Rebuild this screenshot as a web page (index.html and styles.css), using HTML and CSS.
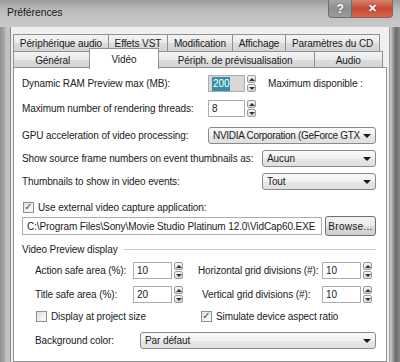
FILE: index.html
```html
<!DOCTYPE html>
<html lang="fr">

<head>
    <meta charset="UTF-8" />
    <title>Préférences</title>
    <link rel="stylesheet" href="styles.css">
</head>

<body>

    <div class="window">
        <div class="titlebar">
            <span class="title">Préférences</span>
            <div class="caption-btns">
                <div class="cap-btn help">?</div>
                <div class="cap-btn close">&#10005;</div>
            </div>
        </div>

        <div class="client">
            <div class="tab-row back">
                <div class="tab">Périphérique audio</div>
                <div class="tab">Effets VST</div>
                <div class="tab">Modification</div>
                <div class="tab">Affichage</div>
                <div class="tab">Paramètres du CD</div>
            </div>
            <div class="tab-row front">
                <div class="tab">Général</div>
                <div class="tab active">Vidéo</div>
                <div class="tab">Périph. de prévisualisation</div>
                <div class="tab">Audio</div>
            </div>

            <div class="panel">
                <div class="row">
                    <span class="label">Dynamic RAM Preview max (MB):</span>
                    <div class="spin">
                        <div class="spin-input grey"><span class="selected">200</span></div>
                        <div class="spin-arrows"><span class="up"></span><span class="down"></span></div>
                    </div>
                    <span class="note">Maximum disponible :</span>
                </div>

                <div class="row mt-8">
                    <span class="label">Maximum number of rendering threads:</span>
                    <div class="spin">
                        <div class="spin-input">8</div>
                        <div class="spin-arrows"><span class="up"></span><span class="down"></span></div>
                    </div>
                </div>

                <div class="row mt-10">
                    <span class="label">GPU acceleration of video processing:</span>
                    <div class="combo"><span class="value tight">NVIDIA Corporation (GeForce GTX</span></div>
                </div>

                <div class="row mt-6">
                    <span class="label wide">Show source frame numbers on event thumbnails as:</span>
                    <div class="combo"><span class="value">Aucun</span></div>
                </div>

                <div class="row mt-6">
                    <span class="label wide">Thumbnails to show in video events:</span>
                    <div class="combo"><span class="value">Tout</span></div>
                </div>

                <div class="row check-row mt-10">
                    <span class="checkbox checked"></span>
                    <span>Use external video capture application:</span>
                </div>

                <div class="row path-row mt-2">
                    <div class="text-input">C:\Program Files\Sony\Movie Studio Platinum 12.0\VidCap60.EXE</div>
                    <div class="button">Browse...</div>
                </div>

                <div class="group-title mt-6">Video Preview display</div>

                <div class="group">
                    <div class="row mt-6">
                        <span class="label small">Action safe area (%):</span>
                        <div class="spin short">
                            <div class="spin-input">10</div>
                            <div class="spin-arrows"><span class="up"></span><span class="down"></span></div>
                        </div>
                        <span class="label right">Horizontal grid divisions (#):</span>
                        <div class="spin short">
                            <div class="spin-input">10</div>
                            <div class="spin-arrows"><span class="up"></span><span class="down"></span></div>
                        </div>
                    </div>

                    <div class="row mt-7">
                        <span class="label small">Title safe area (%):</span>
                        <div class="spin short">
                            <div class="spin-input">20</div>
                            <div class="spin-arrows"><span class="up"></span><span class="down"></span></div>
                        </div>
                        <span class="label right vertical">Vertical grid divisions (#):</span>
                        <div class="spin short">
                            <div class="spin-input">10</div>
                            <div class="spin-arrows"><span class="up"></span><span class="down"></span></div>
                        </div>
                    </div>

                    <div class="row check-row mt-6">
                        <span class="check-cell">
                            <span class="checkbox"></span>
                            <span>Display at project size</span>
                        </span>
                        <span class="checkbox checked"></span>
                        <span>Simulate device aspect ratio</span>
                    </div>

                    <div class="row mt-9">
                        <span class="label bg">Background color:</span>
                        <div class="combo"><span class="value">Par défaut</span></div>
                    </div>
                </div>
            </div>
        </div>
    </div>

</body>

</html>
```

FILE: styles.css
```css
body {
    margin: 0;
    padding: 0;
    font-family: "Liberation Sans", Arial, sans-serif;
    font-size: 10px;
    letter-spacing: -0.1px;
    color: #1a1a1a;
    overflow: hidden;
}

.window {
    width: 400px;
    height: 362px;
    display: flex;
    flex-direction: column;
    overflow: hidden;
    background: linear-gradient(to right, #8e8e8e 0, #a4a4a4 4px, #c2c2c2 6px, #c6c6c6 391px, #9a9a9a 393px, #6a6a6a 396px, #8a8a8a 400px);
}

/* title bar */
.titlebar {
    height: 27px;
    flex: none;
    display: flex;
    justify-content: space-between;
    align-items: flex-start;
    background: linear-gradient(to bottom, #9c9c9c 0, #bcbcbc 10px, #c9c9c9 27px);
}

.title {
    font-size: 10.5px;
    margin: 6px 0 0 7px;
    color: #1a1a1a;
}

.caption-btns {
    display: flex;
    margin-right: 7px;
}

.cap-btn {
    height: 18px;
    display: flex;
    align-items: center;
    justify-content: center;
    color: #fff;
    font-weight: bold;
    border: 1px solid #6e6e6e;
    border-top: none;
    box-sizing: border-box;
}

.help {
    width: 24px;
    font-size: 12px;
    border-radius: 0 0 0 4px;
    background: linear-gradient(to bottom, #a6a6a6, #8e8e8e 50%, #9c9c9c);
    text-shadow: 0 0 2px #555;
}

.close {
    width: 41px;
    font-size: 11px;
    border-left: none;
    border-radius: 0 0 4px 0;
    background: linear-gradient(to bottom, #d9816f, #c64a35 50%, #d2674e);
    text-shadow: 0 0 2px #8a2010;
}

/* dialog client area */
.client {
    flex: 1;
    margin: 0 10px;
    padding: 7px 2px 0 2px;
    background: #f0f0f0;
    border-left: 1px solid #8a8a8a;
    border-right: 1px solid #a0a0a0;
    display: flex;
    flex-direction: column;
}

.tab-row {
    display: flex;
    height: 17px;
}

.tab-row.back {
    margin: 0 7px 0 1px;
}

.tab-row.front {
    margin: 0 4px 0 1px;
}

.tab {
    flex: 1 1 auto;
    display: flex;
    align-items: center;
    justify-content: center;
    padding: 0 5px;
    white-space: nowrap;
    border: 1px solid #8e9097;
    border-bottom: none;
    margin-left: -1px;
    background: linear-gradient(to bottom, #f4f4f4, #e9e9e9 50%, #dcdcdc 51%, #d3d3d3);
}

.tab.active {
    background: #fff;
    margin: -3px -2px 0 -3px;
    height: 21px;
    z-index: 2;
    box-sizing: border-box;
}

.panel {
    flex: 1;
    background: #fff;
    border: 1px solid #8e9097;
    margin-top: -1px;
    padding: 7px 10px 0 8px;
    display: flex;
    flex-direction: column;
}

/* rows */
.row {
    display: flex;
    align-items: center;
    height: 17px;
    white-space: nowrap;
}

.mt-2 { margin-top: 2px; }
.mt-6 { margin-top: 6px; }
.mt-7 { margin-top: 7px; }
.mt-8 { margin-top: 8px; }
.mt-9 { margin-top: 9px; }
.mt-10 { margin-top: 10px; }

.label {
    width: 186px;
    flex: none;
}

.label.wide {
    width: 240px;
}

.label.small {
    width: 98px;
}

.label.right {
    width: 124px;
    margin-left: 15px;
}

.label.vertical {
    width: 120px;
    margin-left: 19px;
}

.label.bg {
    width: 105px;
}

.note {
    margin-left: 12px;
}

/* spin boxes */
.spin {
    display: flex;
    align-items: center;
    width: 48px;
    height: 17px;
}

.spin.short {
    width: 50px;
}

.spin-input {
    flex: 1;
    height: 17px;
    box-sizing: border-box;
    border: 1px solid #abadb3;
    display: flex;
    align-items: center;
    padding-left: 3px;
    background: #fff;
}

.spin-input.grey {
    background: #d8d8d8;
}

.selected {
    background: #3590a6;
    color: #fff;
    padding: 0 1px;
    line-height: 14px;
}

.spin-arrows {
    width: 9px;
    height: 17px;
    margin-left: 2px;
    display: flex;
    flex-direction: column;
    gap: 1px;
}

.spin-arrows span {
    flex: 1;
    border: 1px solid #9a9a9a;
    border-radius: 2px;
    background: linear-gradient(to bottom, #f6f6f6, #d8d8d8);
    display: flex;
    align-items: center;
    justify-content: center;
}

.spin-arrows .up::before {
    content: "";
    border: 3px solid transparent;
    border-top: none;
    border-bottom: 3px solid #333;
}

.spin-arrows .down::before {
    content: "";
    border: 3px solid transparent;
    border-bottom: none;
    border-top: 3px solid #333;
}

/* combo boxes */
.combo {
    flex: 1;
    min-width: 0;
    height: 17px;
    box-sizing: border-box;
    border: 1px solid #8a8a8a;
    border-radius: 3px;
    padding-left: 4px;
    display: flex;
    align-items: center;
    background: linear-gradient(to bottom, #fafafa, #f0f0f0 50%, #e6e6e6 51%, #e0e0e0);
}

.combo .value {
    flex: 1;
    overflow: hidden;
    margin-right: 2px;
}

.combo .value.tight {
    letter-spacing: -0.3px;
}

.combo::after {
    content: "";
    flex: none;
    margin-right: 4px;
    border: 4px solid transparent;
    border-bottom: none;
    border-top: 4px solid #1a1a1a;
}

/* checkboxes */
.check-row {
    height: 14px;
}

.checkbox {
    width: 11px;
    height: 11px;
    box-sizing: border-box;
    border: 1px solid #8f8f8f;
    background: linear-gradient(135deg, #e0e0e0, #fbfbfb);
    margin: 0 4px 0 1px;
    display: flex;
    align-items: center;
    justify-content: center;
    font-size: 10px;
    line-height: 1;
    color: #2c4a8a;
    flex: none;
}

.checkbox.checked::before {
    content: "\2713";
    font-family: "DejaVu Sans", sans-serif;
    font-weight: bold;
}

.check-cell {
    display: flex;
    align-items: center;
    width: 165px;
}

/* path and browse */
.path-row {
    height: 20px;
}

.text-input {
    flex: 1;
    height: 18px;
    box-sizing: border-box;
    border: 1px solid #abadb3;
    padding-left: 4px;
    display: flex;
    align-items: center;
    overflow: hidden;
}

.button {
    width: 51px;
    height: 20px;
    margin-left: 3px;
    box-sizing: border-box;
    border: 1px solid #707070;
    border-radius: 3px;
    display: flex;
    align-items: center;
    justify-content: center;
    background: linear-gradient(to bottom, #f2f2f2, #ebebeb 50%, #dddddd 51%, #cfcfcf);
    letter-spacing: 0.3px;
}

/* group */
.group-title {
    display: flex;
    align-items: center;
    height: 14px;
}

.group-title::after {
    content: "";
    flex: 1;
    border-top: 1px solid #c8ccd0;
    margin-left: 6px;
}

.group {
    padding-left: 13px;
    display: flex;
    flex-direction: column;
}
```
